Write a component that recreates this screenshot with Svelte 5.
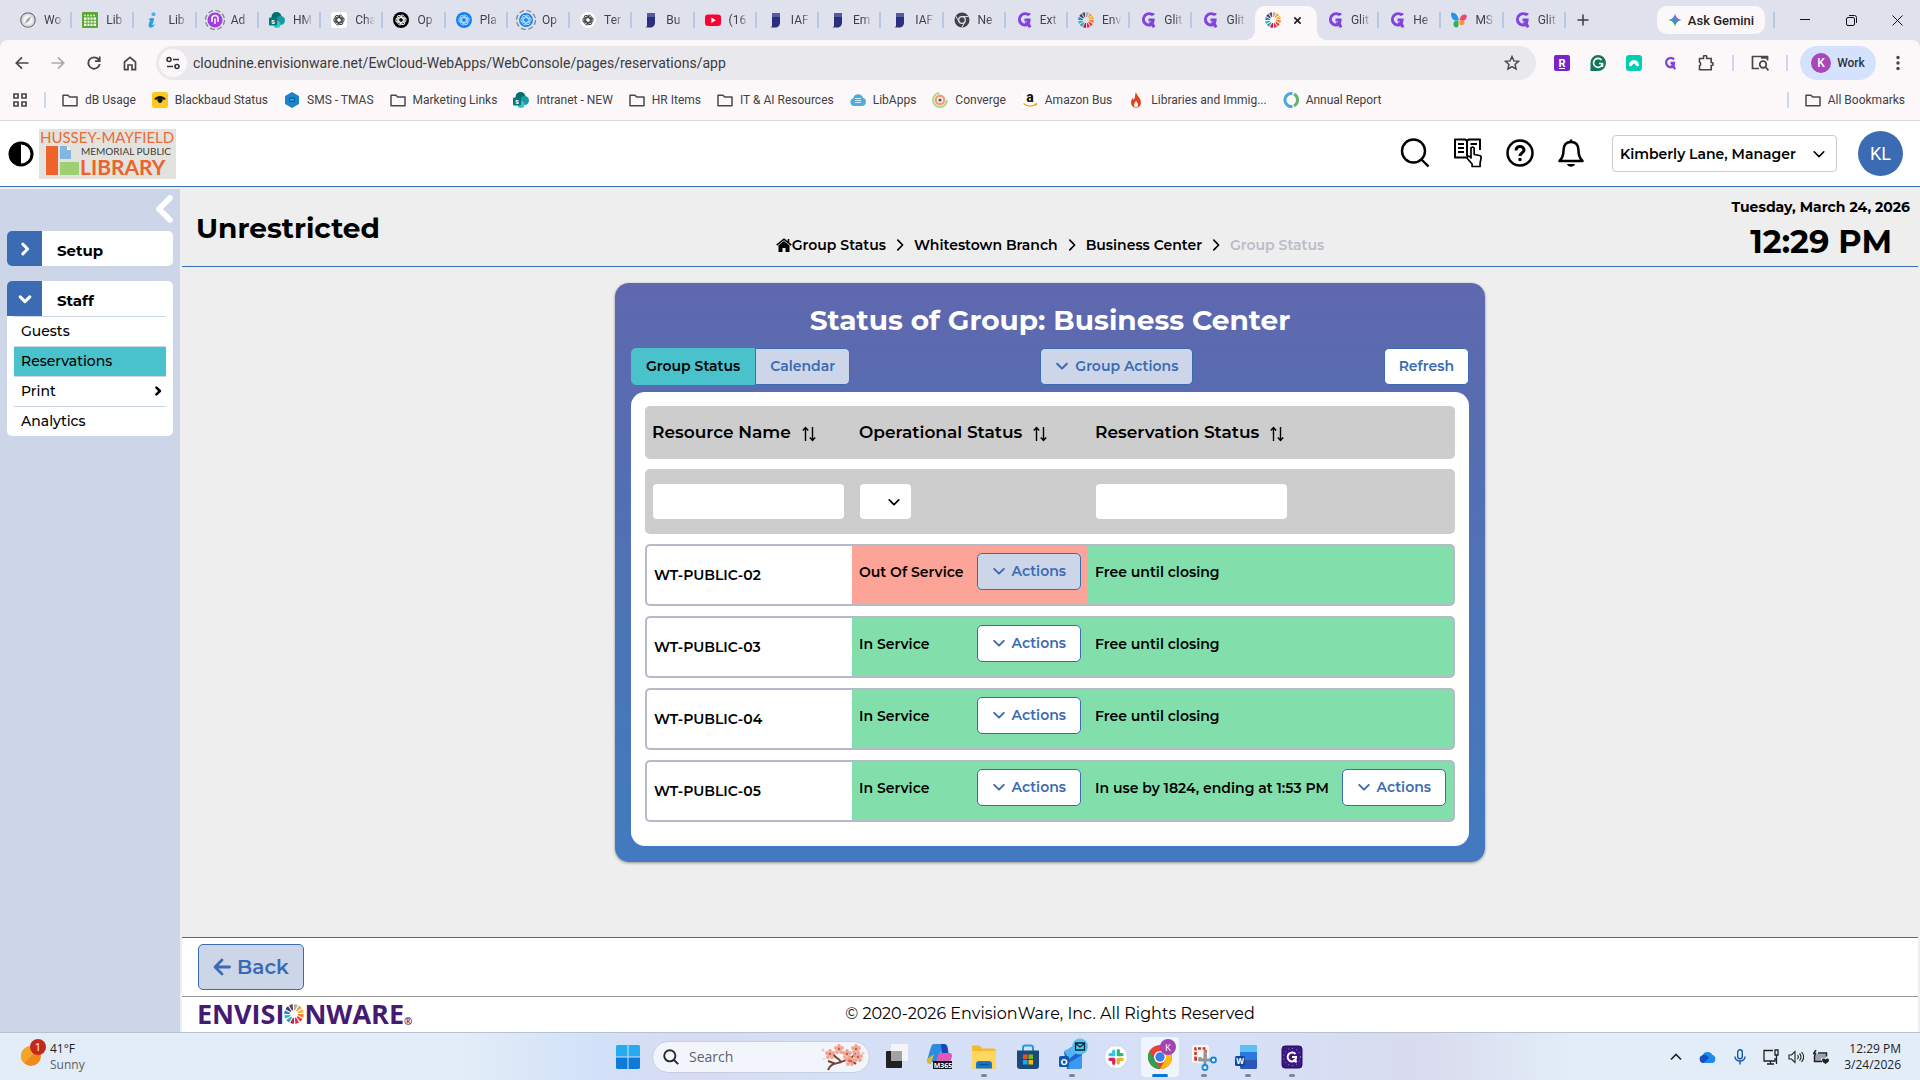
<script>
  let tabs = [
    { icon: 'clock', title: 'Wo' },
    { icon: 'calendar', title: 'Lib' },
    { icon: 'info', title: 'Lib' },
    { icon: 'purple', title: 'Ad' },
    { icon: 'sharepoint', title: 'HM' },
    { icon: 'gpt', title: 'Cha' },
    { icon: 'gptblack', title: 'Op' },
    { icon: 'gptblue', title: 'Pla' },
    { icon: 'gptring', title: 'Op' },
    { icon: 'gptwhite', title: 'Ter' },
    { icon: 'page', title: 'Bu' },
    { icon: 'youtube', title: '(16' },
    { icon: 'page', title: 'IAF' },
    { icon: 'page', title: 'Em' },
    { icon: 'page', title: 'IAF' },
    { icon: 'chromegrey', title: 'Ne' },
    { icon: 'glitch', title: 'Ext' },
    { icon: 'wheel', title: 'Env' },
    { icon: 'glitch', title: 'Glit' },
    { icon: 'glitch', title: 'Glit' },
    { icon: 'wheel', title: '', active: true },
    { icon: 'glitch', title: 'Glit' },
    { icon: 'glitch', title: 'He' },
    { icon: 'butterfly', title: 'MS' },
    { icon: 'glitch', title: 'Glit' }
  ];

  let bookmarks = [
    { icon: 'folder', title: 'dB Usage' },
    { icon: 'blackbaud', title: 'Blackbaud Status' },
    { icon: 'hexagon', title: 'SMS - TMAS' },
    { icon: 'folder', title: 'Marketing Links' },
    { icon: 'sharepoint', title: 'Intranet - NEW' },
    { icon: 'folder', title: 'HR Items' },
    { icon: 'folder', title: 'IT & AI Resources' },
    { icon: 'libapps', title: 'LibApps' },
    { icon: 'converge', title: 'Converge' },
    { icon: 'amazon', title: 'Amazon Bus' },
    { icon: 'flame', title: 'Libraries and Immig...' },
    { icon: 'annual', title: 'Annual Report' }
  ];

  let crumbs = ['Group Status', 'Whitestown Branch', 'Business Center'];

  let resources = [
    { name: 'WT-PUBLIC-02', inService: false, reservation: 'Free until closing', inUse: false },
    { name: 'WT-PUBLIC-03', inService: true, reservation: 'Free until closing', inUse: false },
    { name: 'WT-PUBLIC-04', inService: true, reservation: 'Free until closing', inUse: false },
    { name: 'WT-PUBLIC-05', inService: true, reservation: 'In use by 1824, ending at 1:53 PM', inUse: true }
  ];

  let apps = [
    { icon: 'taskview', state: '' },
    { icon: 'm365', state: '' },
    { icon: 'explorer', state: 'open' },
    { icon: 'store', state: '' },
    { icon: 'outlook', state: 'open' },
    { icon: 'slack', state: '' },
    { icon: 'chrome', state: 'focused' },
    { icon: 'snip', state: 'open' },
    { icon: 'word', state: 'open' },
    { icon: 'glitchapp', state: 'open' }
  ];

  const wheelColors = ['#f9a43a', '#fbb040', '#f58232', '#ee4036', '#e5265e', '#c2185b', '#2ba6a0', '#35b6d8', '#2a86c8', '#3c3f6b', '#5b4a52', '#b8a9b0'];

  let nameFilter = $state('');
  let statusFilter = $state('');
  let reservationFilter = $state('');
</script>

{#snippet wheel()}
  {#each wheelColors as color, i}
    <path d="M8 .2c1.300 0 2.300.2 3 .6L8.900 4.900H8z" fill={color} transform="rotate({i * 30 + 30} 8 8)" />
  {/each}
{/snippet}

{#snippet knot(color)}
  <g fill="none" stroke={color} stroke-width="1">
    {#each [0, 60, 120, 180, 240, 300] as angle}
      <path d="M8 3.400a2.200 2.200 0 0 1 3.300 2.300v3.100L8 10.600" transform="rotate({angle} 8 8)" />
    {/each}
  </g>
{/snippet}

{#snippet chevron(dir, size, width)}
  <svg class="chevron {dir}" width={size} height={size} viewBox="0 0 16 16" fill="none" stroke="currentColor" stroke-width={width} stroke-linecap="round" stroke-linejoin="round">
    <path d="M2.500 5.500 8 11l5.500-5.500" />
  </svg>
{/snippet}

{#snippet favicon(name)}
  <svg class="favicon" width="16" height="16" viewBox="0 0 16 16" overflow="visible">
    {#if name === 'folder'}
      <path d="M1 12.800V3.200h5l1.600 1.700H15v8.800H1z" fill="none" stroke="#46484d" stroke-width="1.500" stroke-linejoin="round" />
    {:else if name === 'clock'}
      <circle cx="8" cy="8" r="7.200" fill="#f2f2f2" stroke="#74777c" stroke-width="1.300" />
      <circle cx="8" cy="8" r="5.500" fill="none" stroke="#bbb" stroke-width=".6" />
      <path d="m11.500 4-2.600 5L4.500 12l2.600-5z" fill="#9da2a8" />
    {:else if name === 'calendar'}
      <rect width="16" height="16" rx="1" fill="#5fa63a" />
      <path d="M2 5.500h12V14H2z" fill="#f4faef" />
      <path d="M3.500 1.500v3M12.500 1.500v3M2 8.300h12M2 11.200h12M5 5.500V14M8 5.500V14M11 5.500V14" stroke="#5fa63a" stroke-width="1" />
      <path d="M2 3.500h12" stroke="#c9e8b4" stroke-width="1.500" stroke-dasharray="2 1" />
    {:else if name === 'info'}
      <circle cx="9.500" cy="2.300" r="2" fill="#46b4e8" />
      <path d="M4 7.500c2-1.800 6-2.300 6-.2 0 1.700-2 5.300-1.500 5.700.4.400 1.500-.4 2.500-1.300-1 2.800-3.200 4.300-4.800 3.900-3.400-.7-.3-5.900-.3-7.400 0-.7-1-.5-1.900-.7z" fill="#2f9fdd" />
    {:else if name === 'purple'}
      <circle cx="8" cy="8" r="9.500" fill="none" stroke="#7b7f88" stroke-width="1.200" stroke-dasharray="5 2.500" />
      <circle cx="8" cy="8" r="7.500" fill="#a13ee0" />
      <path d="M5 10V6.500a3 3 0 0 1 6 0V10M8 6.500V12" fill="none" stroke="#fff" stroke-width="1.500" />
    {:else if name === 'sharepoint'}
      <circle cx="7.500" cy="5" r="5" fill="#036c70" />
      <circle cx="11.500" cy="8.500" r="4.500" fill="#1a9ba1" />
      <circle cx="8" cy="12.500" r="3.500" fill="#37c6d0" />
      <rect x="0" y="5.500" width="8" height="8" rx="1" fill="#03787c" />
      <text x="4" y="12" font-size="7" font-weight="700" fill="#fff" text-anchor="middle">s</text>
    {:else if name === 'gpt' || name === 'gptwhite'}
      <rect width="16" height="16" rx={name === 'gpt' ? 3 : 8} fill="#fff" />
      {@render knot('#33363b')}
    {:else if name === 'gptblack'}
      <circle cx="8" cy="8" r="8" fill="#000" />
      {@render knot('#fff')}
    {:else if name === 'gptblue' || name === 'gptring'}
      <circle cx="8" cy="8" r={name === 'gptring' ? 7 : 8} fill="#1383f5" />
      {#if name === 'gptring'}
        <circle cx="8" cy="8" r="9.500" fill="none" stroke="#7b7f88" stroke-width="1.200" stroke-dasharray="5 2.500" />
      {/if}
      {@render knot('#b9dcff')}
    {:else if name === 'page'}
      <path d="M5 1h8v9.500c0 3-2 5-5 5H3c2 0 2-1.500 2-3z" fill="#2c2f7c" />
      <path d="M5 1h8v4H5z" fill="#565aa6" />
    {:else if name === 'youtube'}
      <rect y="2.500" width="16" height="11.500" rx="3" fill="#ff0033" />
      <path d="m6.300 5.500 4.500 2.700-4.500 2.700z" fill="#fff" />
    {:else if name === 'chromegrey'}
      <circle cx="8" cy="8" r="7.500" fill="#3f4247" />
      <circle cx="8" cy="8" r="3.300" fill="#3f4247" stroke="#dfe2ec" stroke-width="1.300" />
      <path d="M8 4.600h6.500M5 9.700 1.900 4.200M11 9.800l-3.200 5.500" stroke="#dfe2ec" stroke-width="1" />
    {:else if name === 'glitch'}
      <path d="M13 3.200A5.700 5.700 0 1 0 12.500 12l1.500 3.300M12.800 3.300V1M8.500 8h4.600c0 2.500-1.800 4-4.300 4" fill="none" stroke="#8242df" stroke-width="3" />
    {:else if name === 'wheel'}
      {@render wheel()}
    {:else if name === 'butterfly'}
      <path d="M7.800 8C7 3.500 4.500.5 1 .5-.8.500 0 7 3.500 8.500z" fill="#2196e8" />
      <path d="M7.500 8.500C4 8 2 10 2.500 13c.5 3 4 3.500 5 .5z" fill="#33ae62" />
      <path d="M8.500 8C9 4 11.500 2 14.500 2.500 17 3 15.500 8 12 9z" fill="#f0466f" />
      <path d="M8.500 8.500c3-.5 5 .5 5 2.500s-3.500 3.500-5 1z" fill="#f79530" />
    {:else if name === 'blackbaud'}
      <rect width="16" height="16" rx="2.500" fill="#ffc81e" />
      <path d="M2 7c3.500-4 8.500-4 12 0l-2.500 1c-.5-1-1.300-1.500-2-1.800a2.500 2.500 0 1 1-3 0C5.800 6.500 5 7 4.500 8z" fill="#17181a" />
    {:else if name === 'hexagon'}
      <path d="m8 0 7 4v8l-7 4-7-4V4z" fill="#1d84cc" />
      <path d="M5 5.500h6V10H5z" fill="#0f65ad" />
      <path d="M6.300 7h3.400v1.500H6.300z" fill="#55aee6" />
    {:else if name === 'libapps'}
      <path d="M4 14a4 4 0 0 1-.7-7.800A5 5 0 0 1 13 5.800 4.200 4.200 0 0 1 12 14z" fill="#52a9dc" />
      <path d="M5 6.500h6M5 8.500h6M5 10.500h6" stroke="#cdeafc" />
    {:else if name === 'converge'}
      <circle cx="8" cy="8" r="7" fill="none" stroke="#b0d78d" stroke-width="2" stroke-dasharray="32 12" />
      <circle cx="8" cy="8" r="4.200" fill="none" stroke="#f39d78" stroke-width="2.400" />
      <circle cx="8" cy="8" r="1.600" fill="#40546e" />
    {:else if name === 'amazon'}
      <rect width="16" height="16" fill="#fff" />
      <text x="8" y="10" font-size="14" font-weight="800" text-anchor="middle" fill="#111">a</text>
      <path d="M1.500 11.500c4 3.300 9 3.300 12.500.5M14.300 11v2.500" fill="none" stroke="#ff9a1a" stroke-width="1.500" />
    {:else if name === 'flame'}
      <path d="M8 0c.5 3.500 5 6 5 10.500a5 5.300 0 0 1-10 0c0-2 1-3.500 1.700-4.500.5 1 .8 1.500 1.300 1.500C7.500 5.500 6.500 2.500 8 0z" fill="#e2431e" />
      <path d="M8 9c1.500 2 2 3 2 4.300a2 2 0 0 1-4 0C6 12 6.500 11 8 9z" fill="#fff" />
    {:else if name === 'annual'}
      <path d="M9.500 1.600A6.500 6.500 0 1 0 9.500 14.400" fill="none" stroke="#4aa8dc" stroke-width="3" />
      <path d="M11 2.200a6.500 6.500 0 0 1 0 11.600" fill="none" stroke="#63b56c" stroke-width="3" />
    {/if}
  </svg>
{/snippet}

{#snippet appIcon(name)}
  <svg width="28" height="28" viewBox="0 0 28 28" overflow="visible">
    {#if name === 'taskview'}
      <rect x="9" y="1" width="17" height="17" rx="1" fill="#f5f5f5" />
      <rect x="4" y="8" width="16" height="17" rx="1" fill="#222" />
      <path d="M9 8h11v10H9z" fill="#a3a3a3" />
    {:else if name === 'm365'}
      <path d="M8 1h9l-5 18H5c-3 0-4-2-3-5l3-10c.6-2 1.500-3 3-3z" fill="#2b8de0" />
      <path d="M15 1h3c2 0 3 1 3.500 3l1 6h-7z" fill="#1947b8" />
      <path d="M13 10h10c3 0 3.500 2 2.600 5l-2 6H9z" fill="#dd5ab8" />
      <path d="m1 16 7-5-3 10c-3 0-5-1-4-5z" fill="#d8b83f" />
      <rect x="7" y="18" width="19" height="8" fill="#111" />
      <text x="17" y="25" font-size="7" font-weight="700" fill="#fff" text-anchor="middle">M365</text>
    {:else if name === 'explorer'}
      <path d="M2 4c0-1 .5-1.500 1.500-1.500h6l3 3h11c1.500 0 2.500 1 2.500 2V24c0 1-.6 1.500-1.500 1.500h-21C2.500 25.500 2 25 2 24z" fill="#f5b92d" />
      <path d="M2 8h24v15c0 1.600-1 2.500-2.500 2.500h-19C3 25.500 2 24.600 2 23z" fill="#ffd65e" />
      <path d="M6 25.500V21c0-2 1-3 3-3h10c2 0 3 1 3 3v4.500z" fill="#1776c9" />
      <path d="M9.500 21.500h9" stroke="#0a4e94" stroke-width="1.500" />
    {:else if name === 'store'}
      <path d="M9 8V4.500C9 3 9.600 2.500 11 2.500h6c1.400 0 2 .5 2 2V8" fill="none" stroke="#1f9de0" stroke-width="2" />
      <path d="M3 7.500h22V23c0 2-1 3-3 3H6c-2 0-3-1-3-3z" fill="#184a7e" />
      <path d="M9 11.500h4.500V16H9z" fill="#f25022" />
      <path d="M14.500 11.500H19V16h-4.500z" fill="#7fba00" />
      <path d="M9 17h4.500v4.500H9z" fill="#1ba9f0" />
      <path d="M14.500 17H19v4.500h-4.500z" fill="#ffb900" />
    {:else if name === 'outlook'}
      <path d="m6 9 9-6 9 6v14c0 2-1 3-3 3H9z" fill="#1b66cf" />
      <path d="M6 8 16 3l6 4-11 9z" fill="#54b3f4" />
      <path d="m24 12-15 9v3l3 2h9c2 0 3-1 3-3V12z" fill="#3a9bee" />
      <rect x="1" y="13" width="10" height="11" rx="1.500" fill="#1258b0" />
      <text x="6" y="22" font-size="9" font-weight="700" fill="#fff" text-anchor="middle">O</text>
      <circle cx="22" cy="3.500" r="8" fill="#55c3f1" />
      <path d="M17.500 0h9v7h-9zM17.500.5 22 4l4.500-3.500" fill="none" stroke="#17202b" stroke-width="1.300" />
    {:else if name === 'slack'}
      <circle cx="14" cy="14" r="11.500" fill="#fff" stroke="#cacfd8" stroke-width=".8" />
      <g stroke-width="3.200" stroke-linecap="round">
        <path d="M11.700 8v3.500M8 11.700h3.700" stroke="#36c5f0" />
        <path d="M16.300 7.500v4.200M16.500 11.700H20" stroke="#2eb67d" />
        <path d="M16.300 16.300h4M16.300 17v3" stroke="#ecb22e" />
        <path d="M11.700 16.300v4M11.500 16.300H8" stroke="#e01e5a" />
      </g>
    {:else if name === 'chrome'}
      <circle cx="14" cy="14" r="12" fill="#e94235" />
      <path d="m3.600 8 5.200 9L14 26A12 12 0 0 1 3.600 8z" fill="#2da14e" />
      <path d="M14 9h11a12 12 0 0 1-11 17l5.200-9z" fill="#fbbc09" />
      <circle cx="14" cy="14" r="6" fill="#fff" />
      <circle cx="14" cy="14" r="4.700" fill="#3b7de8" />
      <circle cx="22" cy="4" r="8" fill="#a343b5" />
      <text x="22" y="7.500" font-size="9.500" fill="#fff" text-anchor="middle">K</text>
    {:else if name === 'snip'}
      <rect x="2" y="2" width="17" height="18" rx="2" fill="#f7f7f7" />
      <path d="M5.500 16.500v-11h10v11z" fill="none" stroke="#c9331f" stroke-width="2.500" stroke-dasharray="3 1.500" />
      <path d="M10 14v3h13M15 8v16" stroke="#8e969f" stroke-width="3" fill="none" />
      <circle cx="23.500" cy="17" r="2.500" fill="#fff" stroke="#1689d8" stroke-width="1.800" />
      <circle cx="15" cy="24.500" r="2.500" fill="#fff" stroke="#1689d8" stroke-width="1.800" />
    {:else if name === 'word'}
      <rect x="6" y="2" width="17" height="24" rx="2" fill="#2b78df" />
      <path d="M6 4c0-1.300.7-2 2-2h13c1.300 0 2 .7 2 2v5H6z" fill="#5cc0f7" />
      <path d="M6 17h17v7c0 1.300-.7 2-2 2H8c-1.300 0-2-.7-2-2z" fill="#2a55b9" />
      <rect x="1" y="13" width="10" height="10" rx="1.500" fill="#1446a0" />
      <text x="6" y="21" font-size="8" font-weight="700" fill="#fff" text-anchor="middle">W</text>
    {:else if name === 'glitchapp'}
      <rect x="4" y="3" width="20" height="22" rx="3" fill="#3a1784" stroke="#241056" stroke-width="1" />
      <circle cx="14" cy="14" r="8.500" fill="none" stroke="#a895e2" stroke-dasharray="1 3" />
      <path d="M17.500 11a4.500 4.500 0 1 0 0 6l.6 2.500M14 14h4c0 2-1 3.500-3 3.500" fill="none" stroke="#fff" stroke-width="2" />
    {/if}
  </svg>
{/snippet}

<div class="screen">
  <div class="tab-strip">
    <div class="tabs">
      {#each tabs as tab, i}
        <button class="tab" class:active={tab.active} class:no-line={tabs[i + 1]?.active} type="button">
          {@render favicon(tab.icon)}
          {#if tab.active}
            <svg width="9" height="9" viewBox="0 0 10 10" stroke="#1f1f1f" stroke-width="1.800"><path d="m1.500 1.500 7 7M8.500 1.500l-7 7" /></svg>
          {:else}
            <span>{tab.title}</span>
          {/if}
        </button>
      {/each}
    </div>
    <div class="window-tools">
      <button type="button" aria-label="New tab">
        <svg width="12" height="12" viewBox="0 0 12 12" stroke="#3b3d42" stroke-width="1.500"><path d="M6 .5v11M.5 6h11" /></svg>
      </button>
      <button class="gemini" type="button">
        <svg width="14" height="14" viewBox="0 0 16 16">
          <path d="M8 0c.5 4.500 3.500 7.500 8 8H8z" fill="#ea4b3c" />
          <path d="M16 8c-4.500.5-7.500 3.500-8 8V8z" fill="#3f82f0" />
          <path d="M8 16c-.5-4.500-3.500-7.500-8-8h8z" fill="#35a957" />
          <path d="M0 8c4.500-.5 7.500-3.500 8-8v8z" fill="#4c87ee" />
          <path d="M8 4c.5 2.500 1.500 3.500 4 4-2.500.5-3.500 1.500-4 4-.5-2.500-1.500-3.500-4-4 2.500-.5 3.500-1.500 4-4z" fill="#4285f4" />
        </svg>
        Ask Gemini
      </button>
      <span class="line"></span>
      <div class="window-buttons">
        <button type="button" aria-label="Minimize"><svg width="10" height="10" viewBox="0 0 10 10" stroke="#111"><path d="M0 4.500h10" /></svg></button>
        <button type="button" aria-label="Restore"><svg width="11" height="11" viewBox="0 0 11 11" fill="none" stroke="#111"><rect x=".5" y="2.500" width="8" height="8" rx="1.500" /><path d="M3 .5h5.500a2 2 0 0 1 2 2V8" /></svg></button>
        <button type="button" aria-label="Close"><svg width="11" height="11" viewBox="0 0 11 11" stroke="#111"><path d="m.5.500 10 10M10.500.5l-10 10" /></svg></button>
      </div>
    </div>
  </div>

  <div class="browser">
    <div class="toolbar">
      <nav class="nav-buttons" aria-label="Browser">
        <button type="button" aria-label="Back"><svg width="14" height="14" viewBox="0 0 14 14" fill="none" stroke="#43464b" stroke-width="1.700"><path d="M13.500 7H1.500M7 1.300 1.300 7 7 12.700" /></svg></button>
        <button type="button" aria-label="Forward"><svg width="14" height="14" viewBox="0 0 14 14" fill="none" stroke="#a9a8ac" stroke-width="1.700"><path d="M.5 7h12M7 1.300 12.700 7 7 12.700" /></svg></button>
        <button type="button" aria-label="Reload"><svg width="14" height="14" viewBox="0 0 14 14" fill="none" stroke="#43464b" stroke-width="1.800"><path d="M12.700 8a5.700 5.700 0 1 1-1.200-4.600L12.500 5M12.700.5v4.700H8" /></svg></button>
        <button type="button" aria-label="Home"><svg width="14" height="15" viewBox="0 0 14 15" fill="none" stroke="#43464b" stroke-width="1.700"><path d="M1.500 13.700V6L7 1.400 12.500 6v7.700H9V9H5v4.700z" /></svg></button>
      </nav>
      <div class="omnibox">
        <span class="site-info">
          <svg width="14" height="14" viewBox="0 0 14 14" fill="none" stroke="#303236" stroke-width="1.600"><circle cx="3" cy="3.500" r="2" /><path d="M7 3.500h6M1 10.500h6" /><circle cx="11" cy="10.500" r="2" /></svg>
        </span>
        <input class="address" type="text" aria-label="Address" value="cloudnine.envisionware.net/EwCloud-WebApps/WebConsole/pages/reservations/app" />
        <svg width="16" height="16" viewBox="0 0 16 16" fill="none" stroke="#43464b" stroke-width="1.400"><path d="m8 1.500 1.900 4.400 4.700.4L11 9.400l1.100 4.700L8 11.600l-4.100 2.500L5 9.400 1.400 6.300l4.700-.4z" /></svg>
      </div>
      <div class="extensions">
        <svg width="16" height="16" viewBox="0 0 16 16"><rect width="16" height="16" rx="2" fill="#7a22cc" /><text x="8" y="12" font-size="11" font-weight="700" fill="#fff" text-anchor="middle">R</text><path d="M5 13.500h6" stroke="#fff" /></svg>
        <svg width="16" height="16" viewBox="0 0 16 16"><path d="M8 0a8 8 0 1 1 0 16H.5V8A7.500 8 0 0 1 8 0z" fill="#11765c" /><path d="M11.500 5a4.500 4.500 0 1 0 1 3.500H9M12.500 8.500V12" fill="none" stroke="#fff" stroke-width="1.600" /></svg>
        <svg width="16" height="16" viewBox="0 0 16 16"><rect width="16" height="16" rx="3" fill="#02ceb2" /><path d="M3 10.500a5 5.500 0 0 1 10 0l-1.800 1L8 8.300l-3.200 3.200z" fill="#fff" /></svg>
        <svg width="16" height="16" viewBox="0 0 16 16"><path d="M12 4.300a4.600 4.600 0 1 0-.5 7l1.500 3M8.500 8H12c0 2-1.500 3.300-3.300 3.300" fill="none" stroke="#7e43d8" stroke-width="2.400" /></svg>
        <svg width="16" height="16" viewBox="0 0 16 16" fill="none" stroke="#43464b" stroke-width="1.600"><path d="M1.500 3.500h4V2a1.600 1.600 0 0 1 3.200 0v1.500h4.500v4h.5a1.500 1.500 0 0 1 0 3h-.5v4.200H1.500v-4a1.800 1.800 0 0 0 0-3.400z" /></svg>
      </div>
      <span class="line"></span>
      <svg class="tab-search" width="18" height="16" viewBox="0 0 18 16" fill="none" stroke="#43464b" stroke-width="1.700"><path d="M8 13.500H1.500v-12h15v4M10 3h6" /><circle cx="12" cy="9.500" r="3.300" /><path d="m14.500 12 3 3.500" /></svg>
      <span class="line"></span>
      <button class="profile" type="button"><span>K</span>Work</button>
      <svg width="4" height="16" viewBox="0 0 4 16" fill="#43464b"><circle cx="2" cy="2.500" r="1.700" /><circle cx="2" cy="8" r="1.700" /><circle cx="2" cy="13.500" r="1.700" /></svg>
    </div>

    <div class="bookmarks">
      <svg width="16" height="14" viewBox="0 0 16 14" fill="none" stroke="#43464b" stroke-width="1.700"><path d="M2 1h4v4H2zM10 1h4v4h-4zM2 9h4v4H2zM10 9h4v4h-4z" /></svg>
      <span class="line"></span>
      {#each bookmarks as item}
        <a class="bookmark" href="#{item.icon}">{@render favicon(item.icon)}{item.title}</a>
      {/each}
      <span class="line all-line"></span>
      <a class="bookmark" href="#all">{@render favicon('folder')}All Bookmarks</a>
    </div>
  </div>

  <header class="app-header">
    <svg width="26" height="26" viewBox="0 0 26 26"><circle cx="13" cy="13" r="11" fill="#fff" stroke="#000" stroke-width="3" /><path d="M13 1a12 12 0 0 0 0 24z" /></svg>
    <svg class="library-logo" width="137" height="50" viewBox="0 0 137 50">
      <rect width="137" height="50" fill="#e2e3de" />
      <text x="1" y="14" font-size="15" fill="#ec6b35">HUSSEY-MAYFIELD</text>
      <rect x="7" y="17" width="12" height="29" fill="#f0622c" />
      <path d="M21 17h7l4 4v9H21z" fill="#86b6df" />
      <path d="M28 17v4h4z" fill="#fff" />
      <rect x="21" y="33" width="19" height="13" fill="#9fcf73" />
      <text x="42" y="26" font-size="10" fill="#3d3b3a">MEMORIAL PUBLIC</text>
      <text x="41" y="46" font-size="21" font-weight="700" fill="#ee622d">LIBRARY</text>
    </svg>
    <div class="header-tools">
      <button type="button" aria-label="Search"><svg width="30" height="30" viewBox="0 0 30 30" fill="none" stroke="#000" stroke-width="2.400"><circle cx="13.500" cy="13" r="11.500" /><path d="m21.500 21.500 7 7" /></svg></button>
      <button type="button" aria-label="Documentation">
        <svg width="30" height="30" viewBox="0 0 30 30" fill="none" stroke="#000" stroke-width="2" stroke-linejoin="round">
          <path d="M16 19.500H2V1.500h10.500L14 3l1.500-1.500H27V12" />
          <path d="M14 3v15M5 6h6M5 10h6M5 14h6M17.500 6H24M17.500 10H19" />
          <path d="M18 20v-9c0-2.500 3.200-2.500 3.200 0v5.500l5.300 1c1.300.3 1.800 1 1.600 2.300l-1 5.200v3.500h-8V26l-4.600-5.300c-1.200-1.700.8-3.200 2.300-2z" fill="#fff" stroke-width="1.700" />
        </svg>
      </button>
      <button type="button" aria-label="Help">
        <svg width="28" height="28" viewBox="0 0 28 28" fill="none" stroke="#000" stroke-width="2.500"><circle cx="14" cy="14" r="12.500" /><path d="M10 11.500c0-5.500 8-5 8-.5 0 3-4 3-4 6" stroke-width="3" /><circle cx="14" cy="20.500" r="1" stroke-width="1.500" fill="#000" /></svg>
      </button>
      <button type="button" aria-label="Notifications">
        <svg width="28" height="30" viewBox="0 0 28 30" fill="none" stroke="#000" stroke-width="2.500" stroke-linejoin="round"><path d="M14 4c-5 0-7.500 3.500-7.500 8.500 0 6-1.500 8-4 10.500h23c-2.500-2.500-4-4.500-4-10.500C21.500 7.500 19 4 14 4zM14 4V1.500" /><path d="M10 26h8c-.8 3.500-7.200 3.500-8 0z" fill="#000" stroke="none" /></svg>
      </button>
    </div>
    <div class="select-box user-select">
      <select aria-label="User">
        <option>Kimberly Lane, Manager</option>
      </select>
      {@render chevron('down', 14, 1.800)}
    </div>
    <button class="avatar" type="button">KL</button>
  </header>

  <div class="app-body">
    <aside class="sidebar">
      <button class="collapse" type="button" aria-label="Collapse menu">{@render chevron('left', 32, 2.800)}</button>
      <div class="menu-group">
        <button class="menu-title" type="button"><span>{@render chevron('right', 14, 3.500)}</span><b>Setup</b></button>
      </div>
      <div class="menu-group">
        <button class="menu-title" type="button"><span>{@render chevron('down', 14, 3.500)}</span><b>Staff</b></button>
        <ul>
          <li><a href="#guests">Guests</a></li>
          <li><a class="selected" href="#reservations">Reservations</a></li>
          <li><a href="#print">Print {@render chevron('right', 10, 4)}</a></li>
          <li><a href="#analytics">Analytics</a></li>
        </ul>
      </div>
    </aside>

    <div class="content">
      <div class="page-header">
        <h1>Unrestricted</h1>
        <nav class="breadcrumb" aria-label="Breadcrumb">
          {#each crumbs as crumb, i}
            <a href="#crumb{i}">
              {#if i === 0}
                <svg width="16" height="14" viewBox="0 0 16 14"><path d="M8 3 2.500 7.500V14h4v-4h3v4h4V7.500z" /><path d="M.7 7.200 8 1.200l7.300 6M12.500 1v3.500" fill="none" stroke="#000" stroke-width="1.600" /></svg>
              {/if}{crumb}
            </a>
            {@render chevron('right', 14, 1.900)}
          {/each}
          <span>Group Status</span>
        </nav>
        <div class="date-time">
          <div class="date">Tuesday, March 24, 2026</div>
          <div class="time">12:29 PM</div>
        </div>
      </div>

      <main>
        <section class="card">
          <h2>Status of Group: Business Center</h2>
          <div class="card-bar">
            <div class="view-tabs">
              <button class="view-tab current" type="button">Group Status</button>
              <button class="view-tab" type="button">Calendar</button>
            </div>
            <button class="button tinted" type="button">{@render chevron('down', 14, 2.400)}Group Actions</button>
            <button class="button" type="button">Refresh</button>
          </div>
          <div class="panel">
            <table>
              <colgroup>
                <col class="col-name" />
                <col class="col-status" />
                <col />
              </colgroup>
              <thead>
                <tr>
                  {#each ['Resource Name', 'Operational Status', 'Reservation Status'] as heading}
                    <th>
                      {heading}
                      <svg width="14" height="16" viewBox="0 0 14 16" fill="none" stroke="#000" stroke-width="1.400"><path d="M3.500 15V2M.8 4.500 3.500 1.500l2.700 3M10.500 1v13M7.800 11.500l2.700 3 2.700-3" /></svg>
                    </th>
                  {/each}
                </tr>
                <tr class="filters">
                  <td><input type="text" aria-label="Filter by resource name" bind:value={nameFilter} /></td>
                  <td>
                    <div class="select-box status-select">
                      <select aria-label="Filter by operational status" bind:value={statusFilter}>
                        <option value=""></option>
                      </select>
                      {@render chevron('down', 14, 1.900)}
                    </div>
                  </td>
                  <td><input type="text" aria-label="Filter by reservation status" bind:value={reservationFilter} /></td>
                </tr>
              </thead>
              <tbody>
                {#each resources as resource}
                  <tr>
                    <td class="name">{resource.name}</td>
                    <td class={resource.inService ? 'ok' : 'out'}>
                      <div class="cell">
                        {resource.inService ? 'In Service' : 'Out Of Service'}
                        <button class="button" class:tinted={!resource.inService} type="button">{@render chevron('down', 14, 2.200)}Actions</button>
                      </div>
                    </td>
                    <td class="ok">
                      <div class="cell">
                        {resource.reservation}
                        {#if resource.inUse}
                          <button class="button" type="button">{@render chevron('down', 14, 2.200)}Actions</button>
                        {/if}
                      </div>
                    </td>
                  </tr>
                {/each}
              </tbody>
            </table>
          </div>
        </section>
      </main>

      <div class="back-bar">
        <button class="back" type="button">
          <svg width="18" height="18" viewBox="0 0 18 18" fill="none" stroke="currentColor" stroke-width="2.800" stroke-linecap="round" stroke-linejoin="round"><path d="M16.500 9h-14M9 2 2 9l7 7" /></svg>
          Back
        </button>
      </div>
      <footer>
        <div class="brand">
          ENVISI<svg width="20" height="20" viewBox="0 0 16 16">{@render wheel()}</svg>NWARE<small>®</small>
        </div>
        <p>© 2020-2026 EnvisionWare, Inc. All Rights Reserved</p>
      </footer>
    </div>
  </div>

  <div class="taskbar">
    <div class="weather">
      <svg width="28" height="30" viewBox="0 0 28 30" overflow="visible">
        <circle cx="11" cy="14" r="10" fill="#f28a1b" />
        <path d="M1 14a10 10 0 0 1 17-7L4 21a10 10 0 0 1-3-7z" fill="#f4a62c" />
        <circle cx="18" cy="5" r="8" fill="#c4281d" />
        <text x="18" y="9" font-size="11" fill="#fff" text-anchor="middle">1</text>
      </svg>
      <div>41°F<span>Sunny</span></div>
    </div>
    <div class="dock">
      <button class="start" type="button" aria-label="Start">
        <svg width="24" height="24" viewBox="0 0 24 24"><path d="M1 0h10.500v11.500H0V1zM12.500 0H23l1 1v10.500H12.500z" fill="#27aaf0" /><path d="M0 12.500h11.500V24H1l-1-1zM12.500 12.500H24V23l-1 1H12.500z" fill="#0c7cd8" /></svg>
      </button>
      <label class="task-search">
        <svg width="16" height="16" viewBox="0 0 16 16" fill="none" stroke="#26282c" stroke-width="1.900"><circle cx="6.800" cy="6.800" r="5.600" /><path d="m11 11 4.200 4.200" /></svg>
        <input type="text" placeholder="Search" aria-label="Search" />
        <svg width="44" height="28" viewBox="0 0 44 28">
          <path d="M7 27c3-7 8-6 13-8s11-3 15-9M20 19c-2-4-6-4-8-8M26 17c4 0 6 2 9 4M7 18l8 3" fill="none" stroke="#7a3d31" stroke-width="2" />
          <g fill="#f2a48e">
            {#each [[9, 11], [18, 6], [26, 11], [35, 6], [37, 14], [29, 18]] as [x, y]}
              <circle cx={x} cy={y - 3} r="1.900" /><circle cx={x + 3} cy={y - 1} r="1.900" /><circle cx={x + 2} cy={y + 3} r="1.900" /><circle cx={x - 2} cy={y + 3} r="1.900" /><circle cx={x - 3} cy={y - 1} r="1.900" />
              <circle cx={x} cy={y} r="1.500" fill="#d65b45" />
            {/each}
          </g>
          <g fill="#f4c5bb"><circle cx="2" cy="7" r="1.500" /><circle cx="3" cy="16" r="1" /><circle cx="42" cy="10" r="1.500" /></g>
        </svg>
      </label>
      {#each apps as app}
        <button class="app {app.state}" type="button" aria-label={app.icon}>{@render appIcon(app.icon)}</button>
      {/each}
    </div>
    <div class="tray">
      <svg width="12" height="8" viewBox="0 0 12 8" fill="none" stroke="#222" stroke-width="1.600"><path d="m1 6.500 5-5 5 5" /></svg>
      <svg width="18" height="14" viewBox="0 0 18 14"><path d="M4.500 13a4 4 0 0 1-1-7.800A5.500 5.500 0 0 1 13.500 5 4.200 4.200 0 0 1 13.500 13z" fill="#1d8bea" /><path d="M4.500 13a4 4 0 0 1-1-7.800C6 4 8.500 5.500 10 8z" fill="#1a4fc0" /></svg>
      <svg width="12" height="16" viewBox="0 0 12 16" fill="none" stroke="#1957a6" stroke-width="1.400"><rect x="3.700" y=".8" width="4.600" height="9" rx="2.300" /><path d="M1 7.500c0 6 10 6 10 0M6 12v3.500" /></svg>
      <svg width="16" height="16" viewBox="0 0 16 16" fill="none" stroke="#222" stroke-width="1.300"><path d="M10 1.500H1v10.500h11V9M4 15h7M7.500 12v3M12 1h3v5h-3zM13.500 6v9" /></svg>
      <svg width="16" height="14" viewBox="0 0 16 14" fill="none" stroke="#222" stroke-width="1.100"><path d="M1 5h2.500L7 1.500v11L3.500 9H1zM9.500 5c1 1.200 1 2.800 0 4M11.500 3.500c2 2 2 5 0 7M13.500 2c2.600 3 2.600 7 0 10" /></svg>
      <svg width="16" height="14" viewBox="0 0 16 14"><path d="M4 4h9v4H8v4H1V5z" fill="#9ca3ac" /><path d="M5 3h8.500v3.500M9 11.500H1.500V6M3 0 .5 3.500h2L1.500 6" fill="none" stroke="#222" stroke-width="1.500" /><path d="M12.500 14c-2-1.300-3.500-2.300-3.500-4 0-1.800 2.500-2 3.500-.5 1-1.500 3.500-1.300 3.500.5 0 1.700-1.500 2.700-3.500 4z" fill="#222" /></svg>
      <div class="clock">12:29 PM<br />3/24/2026</div>
    </div>
  </div>
</div>

<style>
  :global(body) {
    background: #dfe2ec;
  }

  .screen {
    --blue: #3a6bb3;
    --pale: #cdd5e8;
    --teal: #49c2cb;
    display: flex;
    flex-direction: column;
    min-height: 100vh;
    font-family: 'Segoe UI', Roboto, sans-serif;
    font-size: 12px;
    color: #3f4145;
  }

  button,
  input,
  select {
    font: inherit;
    color: inherit;
    margin: 0;
    padding: 0;
    border: 0;
    background: none;
    box-sizing: border-box;
  }

  a {
    color: inherit;
    text-decoration: none;
  }

  svg {
    flex: none;
    display: block;
  }

  .line {
    width: 2px;
    height: 16px;
    background: #c9d8f5;
    flex: none;
  }

  .chevron.left {
    transform: rotate(90deg);
  }

  .chevron.right {
    transform: rotate(-90deg);
  }

  /* browser window */
  .tab-strip {
    display: flex;
    height: 40px;
    padding-left: 10px;
  }

  .tabs {
    display: flex;
    flex: 1;
    min-width: 0;
  }

  .tab {
    flex: 1 1 0;
    min-width: 0;
    display: flex;
    align-items: center;
    gap: 8px;
    padding: 0 4px 0 10px;
    background: linear-gradient(#b8c8e4, #b8c8e4) right center / 2px 16px no-repeat;
  }

  .tab.no-line {
    background: none;
  }

  .tab span {
    flex: 1;
    text-align: left;
    white-space: nowrap;
    mask-image: linear-gradient(90deg, #000 10px, transparent 20px);
  }

  .tab.active {
    position: relative;
    align-self: flex-end;
    height: 34px;
    padding-bottom: 6px;
    background: #fcf8f9;
    border-radius: 10px 10px 0 0;
    gap: 12px;
  }

  .tab.active::before,
  .tab.active::after {
    content: '';
    position: absolute;
    bottom: 0;
    width: 10px;
    height: 10px;
    background: radial-gradient(circle at 0 0, transparent 10px, #fcf8f9 10px);
  }

  .tab.active::before {
    right: 100%;
  }

  .tab.active::after {
    left: 100%;
    transform: scaleX(-1);
  }

  .window-tools {
    display: flex;
    align-items: center;
    width: 354px;
    padding-left: 11px;
    box-sizing: border-box;
  }

  .window-tools .line {
    background: #b8c8e4;
  }

  .gemini {
    display: flex;
    align-items: center;
    justify-content: center;
    gap: 6px;
    width: 108px;
    height: 28px;
    margin: 0 8px 0 68px;
    background: #fcf8f9;
    border-radius: 10px;
    color: #1f1f1f;
    font-size: 13px;
    font-weight: 500;
    white-space: nowrap;
  }

  .window-buttons {
    display: flex;
    margin-left: auto;
  }

  .window-buttons button {
    width: 46px;
    display: flex;
    justify-content: center;
    align-items: center;
  }

  .browser {
    background: #fcf8f9;
    border-bottom: 1px solid #dcdcdf;
    border-radius: 8px 8px 0 0;
  }

  .toolbar {
    display: flex;
    align-items: center;
    padding: 6px 20px 0 4px;
  }

  .nav-buttons {
    display: flex;
    margin-right: 8px;
  }

  .nav-buttons button {
    width: 36px;
    display: flex;
    justify-content: center;
  }

  .omnibox {
    flex: 1;
    display: flex;
    align-items: center;
    height: 34px;
    padding: 0 16px 0 3px;
    background: #e9e8ed;
    border-radius: 17px;
  }

  .site-info {
    width: 28px;
    height: 28px;
    border-radius: 50%;
    background: #fcf8f9;
    display: grid;
    place-items: center;
    flex: none;
  }

  .address {
    flex: 1;
    height: 28px;
    padding-left: 6px;
    font-size: 14px;
    color: #3a3b40;
  }

  .extensions {
    display: flex;
    gap: 20px;
    margin: 0 18px;
    align-items: center;
  }

  .tab-search {
    margin: 0 17px;
  }

  .profile {
    display: flex;
    align-items: center;
    justify-content: center;
    gap: 6px;
    width: 76px;
    height: 34px;
    margin: 0 20px 0 12px;
    border-radius: 17px;
    background: #d5e2fd;
    color: #2c3340;
    font-weight: 500;
  }

  .profile span {
    width: 20px;
    height: 20px;
    line-height: 20px;
    border-radius: 50%;
    background: #a946b9;
    color: #fff;
  }

  .bookmarks {
    display: flex;
    align-items: center;
    height: 40px;
    gap: 16px;
    padding: 0 15px 0 12px;
    white-space: nowrap;
  }

  .bookmark {
    display: flex;
    align-items: center;
    gap: 7px;
  }

  .bookmarks .all-line {
    margin-left: auto;
  }

  /* application header */
  .app-header {
    display: flex;
    align-items: center;
    height: 65px;
    padding: 0 17px 0 8px;
    background: #fff;
    border-bottom: 1px solid var(--blue);
  }

  .library-logo {
    margin-left: 5px;
    font-family: Lato, sans-serif;
  }

  .header-tools {
    display: flex;
    gap: 23px;
    align-items: center;
    margin: 0 27px 2px auto;
  }

  .select-box {
    display: grid;
    align-items: center;
    background: #fff;
    border-radius: 4px;
  }

  .select-box > :global(*) {
    grid-area: 1 / 1;
  }

  .select-box .chevron {
    justify-self: end;
    margin-right: 10px;
    pointer-events: none;
    color: #000;
  }

  .select-box select {
    appearance: none;
    width: 100%;
    height: 35px;
    padding: 0 7px;
  }

  .user-select {
    width: 223px;
    border: 1px solid #ccc;
    font-family: Montserrat, Inter, sans-serif;
    font-size: 14px;
    font-weight: 600;
    color: #000;
  }

  .avatar {
    width: 45px;
    height: 45px;
    margin-left: 21px;
    border-radius: 50%;
    background: var(--blue);
    color: #fff;
    font-size: 18px;
  }

  /* sidebar */
  .app-body {
    flex: 1;
    display: flex;
    gap: 2px;
    padding-right: 2px;
    background: #eee;
    font-family: Montserrat, Inter, sans-serif;
    font-size: 14px;
    font-weight: 500;
    color: #000;
  }

  .sidebar {
    width: 180px;
    margin-top: 2px;
    padding: 4px 7px 0;
    box-sizing: border-box;
    background: var(--pale);
  }

  .collapse {
    display: block;
    margin: 0 -8px 6px auto;
    color: #fff;
  }

  .menu-group {
    margin-bottom: 15px;
    background: #fff;
    border-radius: 5px;
    overflow: hidden;
  }

  .menu-title {
    display: flex;
    align-items: center;
    gap: 15px;
    width: 100%;
    font-size: 15px;
  }

  .menu-title b {
    padding-top: 4px;
    font-weight: 700;
  }

  .menu-title span {
    width: 35px;
    height: 35px;
    display: grid;
    place-items: center;
    background: var(--blue);
    color: #fff;
  }

  .menu-group ul {
    list-style: none;
    margin: 0;
    padding: 0 7px;
  }

  .menu-group a {
    display: flex;
    align-items: center;
    justify-content: space-between;
    height: 27px;
    padding: 0 3px 2px 7px;
    border-top: 1px solid var(--pale);
  }

  .menu-group .selected {
    background: var(--teal);
  }

  /* page */
  .content {
    flex: 1;
    display: flex;
    flex-direction: column;
    min-width: 0;
  }

  .page-header {
    display: grid;
    grid-template-columns: 1fr auto 1fr;
    height: 79px;
    padding: 0 8px;
    border-bottom: 1px solid var(--blue);
  }

  h1,
  h2 {
    margin: 0;
    font-size: 28px;
    font-weight: 700;
    line-height: 36px;
  }

  h1 {
    align-self: center;
    padding: 2px 0 0 6px;
  }

  .breadcrumb {
    display: flex;
    align-items: center;
    align-self: end;
    gap: 7px;
    height: 20px;
    margin-bottom: 12px;
    font-weight: 600;
  }

  .breadcrumb a {
    display: flex;
    align-items: center;
  }

  .breadcrumb span {
    color: #babdc6;
  }

  .date-time {
    text-align: right;
    padding-top: 10px;
    font-weight: 700;
  }

  .date {
    line-height: 20px;
  }

  .time {
    padding-right: 18px;
    font-size: 32px;
    line-height: 50px;
  }

  main {
    flex: 1;
    padding: 16px 0;
  }

  .card {
    width: 870px;
    max-width: 100%;
    margin: 0 auto;
    padding: 19px 16px 16px;
    box-sizing: border-box;
    border-radius: 14px;
    background: linear-gradient(#5f68ae, #4a75b8 65%, #427abf);
    box-shadow: 0 1px 3px rgba(0, 0, 0, 0.4);
  }

  h2 {
    color: #fff;
    text-align: center;
  }

  .card-bar {
    display: flex;
    align-items: center;
    justify-content: space-between;
    height: 37px;
    margin: 10px 0 7px;
  }

  .view-tabs {
    display: flex;
    align-items: center;
  }

  .view-tab,
  .button {
    height: 37px;
    padding: 0 14px 1px;
    border: 1px solid var(--blue);
    border-radius: 5px;
    background: #fff;
    color: var(--blue);
    font-weight: 600;
    white-space: nowrap;
  }

  .view-tab {
    background: var(--pale);
    border-radius: 0 5px 5px 0;
  }

  .view-tab.current {
    background: var(--teal);
    border-color: var(--teal);
    border-radius: 5px 0 0 5px;
    color: #000;
  }

  .button {
    display: flex;
    align-items: center;
    gap: 6px;
  }

  .button.tinted {
    background: var(--pale);
  }

  .panel {
    padding: 4px 14px 14px;
    background: #fff;
    border-radius: 14px;
  }

  table {
    width: 100%;
    table-layout: fixed;
    border-collapse: separate;
    border-spacing: 0 10px;
  }

  .col-name {
    width: 207px;
  }

  .col-status {
    width: 236px;
  }

  th,
  td {
    padding: 0 7px;
    box-sizing: border-box;
    text-align: left;
  }

  th {
    height: 53px;
    padding-bottom: 2px;
    font-size: 17px;
    font-weight: 600;
    white-space: nowrap;
  }

  th svg {
    display: inline;
    margin-left: 6px;
    vertical-align: -4px;
  }

  thead tr > * {
    background: #cdcdcd;
  }

  tr > :first-child {
    border-radius: 5px 0 0 5px;
  }

  tr > :last-child {
    border-radius: 0 5px 5px 0;
  }

  .filters td {
    height: 65px;
    padding: 0 8px;
  }

  .filters input {
    display: block;
    width: 191px;
    height: 35px;
    padding: 0 8px;
    background: #fff;
    border-radius: 4px;
  }

  .status-select {
    width: 51px;
  }

  tbody td {
    height: 62px;
    border: 2px solid #b6bac8;
    border-width: 2px 0;
    font-weight: 600;
  }

  tbody td:first-child {
    border-left-width: 2px;
  }

  tbody td:last-child {
    border-right-width: 2px;
  }

  td.ok,
  td.out {
    padding-bottom: 7px;
  }

  .ok {
    background: #82dfab;
  }

  .out {
    background: #fca498;
  }

  .cell {
    display: flex;
    align-items: center;
    justify-content: space-between;
    height: 37px;
    white-space: nowrap;
  }

  .back-bar {
    height: 59px;
    padding: 6px 16px 0;
    box-sizing: border-box;
    background: #fff;
    border-top: 1px solid var(--blue);
  }

  .back {
    display: flex;
    align-items: center;
    gap: 6px;
    height: 46px;
    padding: 0 14px;
    border: 1px solid var(--blue);
    border-radius: 5px;
    background: var(--pale);
    color: var(--blue);
    font-size: 20px;
    font-weight: 600;
  }

  footer {
    display: grid;
    grid-template-columns: 1fr auto 1fr;
    align-items: center;
    height: 36px;
    padding: 0 15px 2px;
    background: #fff;
    border-top: 1px solid #999;
    box-sizing: border-box;
  }

  .brand {
    display: flex;
    align-items: center;
    font-family: 'Open Sans', sans-serif;
    font-size: 27px;
    font-weight: 700;
    line-height: 30px;
    color: #451a73;
  }

  .brand small {
    align-self: flex-end;
    font-size: 10px;
    line-height: 16px;
  }

  footer p {
    margin: 0;
    font-size: 16px;
    font-weight: 400;
  }

  /* taskbar */
  .taskbar {
    display: grid;
    grid-template-columns: 1fr auto 1fr;
    align-items: center;
    height: 48px;
    box-sizing: border-box;
    border-top: 1px solid #b5c2d2;
    background: linear-gradient(90deg, #e2edf7 24%, #d2e1f9 31%, #d8dbf2 36%, #d5e0f6 42%, #d6e0f6 65%, #d9dbee 74%, #e2edf8 82%);
    color: #222;
    font-family: 'Segoe UI', 'Open Sans', sans-serif;
  }

  .weather {
    display: flex;
    align-items: center;
    gap: 2px;
    padding-left: 20px;
    line-height: 16px;
  }

  .weather span {
    display: block;
    color: #5c6166;
  }

  .dock {
    display: flex;
    align-items: center;
    gap: 6px;
    padding-left: 7px;
  }

  .start {
    width: 24px;
    margin-right: 6px;
  }

  .task-search {
    display: flex;
    align-items: center;
    gap: 10px;
    width: 218px;
    height: 32px;
    padding: 0 4px 0 10px;
    margin-right: 1px;
    box-sizing: border-box;
    border: 1px solid #c6cfde;
    border-radius: 16px;
    background: #f2f6fc;
  }

  .task-search input {
    flex: 1;
    min-width: 0;
    font-size: 14px;
  }

  .task-search input::placeholder {
    color: #5e6167;
    opacity: 1;
  }

  .app {
    position: relative;
    width: 38px;
    height: 40px;
    display: grid;
    place-items: center;
    border-radius: 4px;
  }

  .app.focused {
    background: #f0f4fc;
  }

  .app.open::after,
  .app.focused::after {
    content: '';
    position: absolute;
    bottom: 0;
    left: 50%;
    width: 6px;
    height: 3px;
    border-radius: 2px;
    background: #80868f;
    transform: translateX(-50%);
  }

  .app.focused::after {
    width: 16px;
    background: #0b75d3;
  }

  .tray {
    display: flex;
    align-items: center;
    justify-content: flex-end;
    padding-right: 19px;
    gap: 9px;
  }

  .tray svg:nth-child(-n + 3) {
    margin-right: 8px;
  }

  .clock {
    margin-left: 6px;
    text-align: right;
    line-height: 16px;
  }
</style>
